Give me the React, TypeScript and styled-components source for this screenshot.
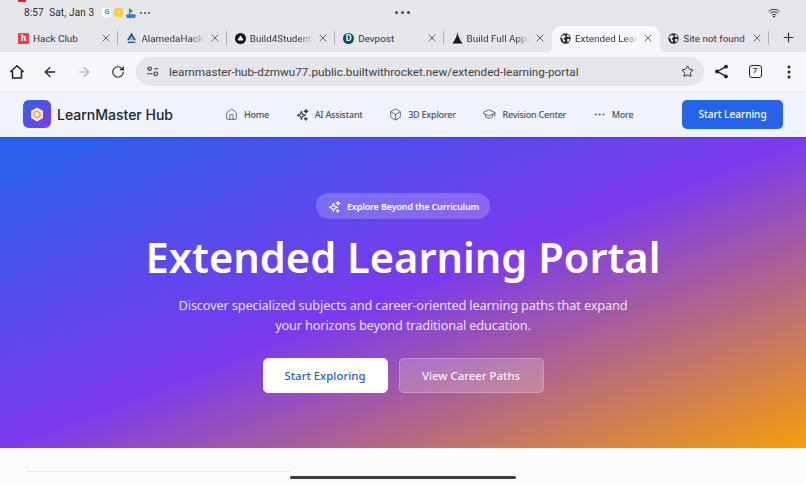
import React from 'react';
import styled, { createGlobalStyle } from 'styled-components';
import { ArrowLeft, ArrowRight, Box, GraduationCap, House, MoreHorizontal, Plus, RotateCw, Star, X } from 'lucide-react';

const GlobalStyle = createGlobalStyle`
  html, body { margin: 0; padding: 0; background: #fafbfc; }
  * { box-sizing: border-box; }
`;

const Page = styled.div`
  position: relative;
  width: 806px;
  height: 484px;
  overflow: hidden;
  display: flex;
  flex-direction: column;
  font-family: 'Noto Sans', sans-serif;
`;

const RecMark = styled.div`
  position: absolute;
  left: 18px;
  top: 0;
  width: 8px;
  height: 2px;
  background: #d8232a;
`;

const StatusBar = styled.div`
  height: 22px;
  flex: none;
  background: #e4e6ea;
  display: grid;
  grid-template-columns: 1fr auto 1fr;
  align-items: center;
  padding: 3px 26px 0 24px;
  font-family: 'Roboto', sans-serif;
  font-size: 10px;
  color: #2b2d30;
`;

const StatusLeft = styled.div`
  display: flex;
  align-items: center;
  gap: 8px;
`;

const StatusTime = styled.span`
  letter-spacing: 0.15px;
  white-space: pre;
`;

const StatusIcons = styled.div`
  display: flex;
  align-items: center;
  gap: 3px;
`;

const Notif = styled.span<{ $bg: string; $color: string }>`
  width: 9px;
  height: 9px;
  border-radius: 2.5px;
  background: ${({ $bg }) => $bg};
  color: ${({ $color }) => $color};
  font-size: 7px;
  font-weight: 700;
  line-height: 9px;
  text-align: center;
`;

const Dots = styled.div<{ $size: number }>`
  display: flex;
  gap: ${({ $size }) => $size}px;
  margin-left: 1px;
  justify-content: center;

  i {
    width: ${({ $size }) => $size}px;
    height: ${({ $size }) => $size}px;
    border-radius: 50%;
    background: #44474c;
  }
`;

const StatusRight = styled.div`
  display: flex;
  justify-content: flex-end;
`;

const TabStrip = styled.div`
  height: 30px;
  flex: none;
  background: #e4e6ea;
  display: flex;
  align-items: stretch;
  padding-left: 10px;
  padding-top: 4px;
  font-family: 'Roboto', sans-serif;
`;

const Tab = styled.div<{ $active?: boolean; $sep?: boolean }>`
  position: relative;
  width: 108.4px;
  display: flex;
  align-items: center;
  gap: 4px;
  padding: 0 6px 2px 8px;
  font-size: 9.9px;
  color: #33363a;
  border-radius: 9px 9px 0 0;
  background: ${({ $active }) => ($active ? '#f5f7fc' : 'transparent')};

  ${({ $sep }) =>
    $sep &&
    `&::after {
      content: '';
      position: absolute;
      right: 0;
      top: 5px;
      height: 14px;
      width: 1px;
      background: #a9b1ba;
    }`}

  ${({ $active }) =>
    $active &&
    `&::before, &::after {
      content: '';
      position: absolute;
      bottom: 0;
      width: 7px;
      height: 7px;
    }
    &::before {
      left: -7px;
      background: radial-gradient(circle at 0 0, transparent 7px, #f5f7fc 7.5px);
    }
    &::after {
      right: -7px;
      background: radial-gradient(circle at 100% 0, transparent 7px, #f5f7fc 7.5px);
    }`}
`;

const TabTitle = styled.span<{ $fade?: boolean }>`
  flex: 1;
  min-width: 0;
  overflow: hidden;
  white-space: nowrap;
  ${({ $fade }) =>
    $fade && 'mask-image: linear-gradient(90deg, #000 78%, transparent 100%);'}
`;

const TabClose = styled(X)`
  flex: none;
  width: 12px;
  height: 12px;
  color: #3c3f44;
`;

const Favicon = styled.span<{ $bg: string; $round?: boolean }>`
  flex: none;
  width: 11px;
  height: 11px;
  display: flex;
  align-items: center;
  justify-content: center;
  background: ${({ $bg }) => $bg};
  border-radius: ${({ $round }) => ($round ? '50%' : '1px')};
  color: #fff;
  font-size: 9px;
  font-weight: 700;
  line-height: 1;
`;

const NewTab = styled(Plus)`
  width: 15px;
  height: 15px;
  margin: 4px 0 0 12px;
  color: #2a2c30;
`;

const Toolbar = styled.div`
  height: 40px;
  flex: none;
  background: #f5f7fc;
  border-bottom: 1px solid #e3e5e9;
  display: flex;
  align-items: center;
  color: #1f2124;
`;

const ToolSlot = styled.span<{ $w?: number; $muted?: boolean }>`
  width: ${({ $w }) => $w ?? 34}px;
  flex: none;
  display: flex;
  justify-content: center;
  align-items: center;
  color: ${({ $muted }) => ($muted ? '#a5a8ad' : '#1f2124')};
`;

const Omnibox = styled.div`
  width: 568px;
  height: 29px;
  flex: none;
  margin-left: 1px;
  background: #e4e6ea;
  border-radius: 15px;
  display: flex;
  align-items: center;
  padding: 0 10px 0 11px;
  font-family: 'Roboto', sans-serif;
  font-size: 11.7px;
  color: #3d4043;
`;

const Url = styled.span`
  flex: 1;
  margin-left: 10px;
  white-space: nowrap;
`;

const TabCount = styled.span`
  width: 13px;
  height: 13px;
  border: 1.5px solid #1f2124;
  border-radius: 3px;
  font-family: 'Roboto', sans-serif;
  font-size: 8px;
  font-weight: 500;
  line-height: 10px;
  text-align: center;
`;

const SiteNav = styled.nav`
  height: 45px;
  flex: none;
  background: #f0f3f9;
  display: flex;
  align-items: center;
  padding: 0 23px 1px 23px;
  box-shadow: 0 1px 1px rgba(30, 40, 80, 0.25);
  position: relative;
`;

const Brand = styled.div`
  display: flex;
  align-items: center;
  gap: 6px;
  width: 202px;
  flex: none;
`;

const LogoTile = styled.div`
  width: 28px;
  height: 28px;
  border-radius: 6px;
  background: linear-gradient(135deg, #2f62e6, #7c3aed);
  display: flex;
  align-items: center;
  justify-content: center;
`;

const BrandName = styled.span`
  font-family: 'Inter', sans-serif;
  font-size: 14px;
  font-weight: 500;
  color: #1e2533;
  white-space: nowrap;
`;

const NavLinks = styled.div`
  display: flex;
  flex: 1;
  align-items: center;
  gap: 26.6px;
`;

const NavLink = styled.a`
  display: flex;
  align-items: center;
  gap: 6px;
  font-size: 9px;
  font-weight: 500;
  letter-spacing: -0.22px;
  color: #465064;
  white-space: nowrap;
`;

const CtaButton = styled.button`
  width: 101px;
  height: 29px;
  border: 0;
  padding: 0;
  border-radius: 5px;
  background: #2563eb;
  color: #fff;
  font-family: 'Noto Sans', sans-serif;
  font-size: 10px;
  font-weight: 500;
`;

const Hero = styled.section`
  height: 311px;
  flex: none;
  background: linear-gradient(to bottom right, #2563eb 0%, #7c3aed 50%, #f59e0b 100%);
  display: flex;
  flex-direction: column;
  align-items: center;
  padding-top: 56px;
  color: #fff;
`;

const Pill = styled.div`
  height: 26px;
  padding: 0 11px 0 12px;
  display: flex;
  align-items: center;
  gap: 6px;
  border-radius: 13px;
  background: rgba(255, 255, 255, 0.2);
  font-size: 9px;
  font-weight: 600;
  letter-spacing: -0.15px;
`;

const HeroTitle = styled.h1`
  margin: 9px 0 0;
  font-size: 41.6px;
  font-weight: 600;
  line-height: 58px;
  white-space: nowrap;
`;

const HeroText = styled.p`
  margin: 9px 0 0;
  width: 460px;
  text-align: center;
  font-size: 12.8px;
  letter-spacing: -0.17px;
  line-height: 20px;
  color: rgba(255, 255, 255, 0.85);
`;

const HeroActions = styled.div`
  display: flex;
  gap: 11px;
  margin-top: 23px;
`;

const HeroButton = styled.button<{ $ghost?: boolean }>`
  height: 35px;
  width: ${({ $ghost }) => ($ghost ? 145 : 125)}px;
  border-radius: 5px;
  padding: 0;
  font-family: 'Noto Sans', sans-serif;
  font-size: 11.4px;
  font-weight: 500;
  border: 1px solid ${({ $ghost }) => ($ghost ? 'rgba(255,255,255,0.2)' : '#fff')};
  background: ${({ $ghost }) => ($ghost ? 'rgba(255,255,255,0.2)' : '#fff')};
  color: ${({ $ghost }) => ($ghost ? 'rgba(255,255,255,0.92)' : '#2a5fc4')};
`;

const Below = styled.section`
  flex: 1;
  background: #fafbfc;
  padding: 23px 0 0 25px;
`;

const FaintRule = styled.div`
  width: 266px;
  height: 1px;
  background: #e9ebef;
`;

const HomeIndicator = styled.div`
  position: absolute;
  left: 290px;
  bottom: 5px;
  width: 226px;
  height: 3px;
  border-radius: 2px;
  background: #3b3d40;
`;

const Sparkle = ({ size, color }: { size: number; color: string }) => (
  <svg width={size} height={size} viewBox="0 0 24 24" fill="none" stroke={color} strokeWidth="1.9" strokeLinejoin="round">
    <path d="M10 6l2 5.5 5.5 2-5.5 2L10 21l-2-5.5-5.5-2 5.5-2z" />
    <path d="M18.5 2.5l1 2.5 2.5 1-2.5 1-1 2.5-1-2.5-2.5-1 2.5-1z" />
    <path d="M18 17.5l.8 1.7 1.7.8-1.7.8-.8 1.7-.8-1.7-1.7-.8 1.7-.8z" />
  </svg>
);

const GlobeFav = () => (
  <svg width="11" height="11" viewBox="0 0 12 12">
    <circle cx="6" cy="6" r="5.6" fill="#2b2d30" />
    <path d="M2 3.2l2.6-.9 1.5 1.2-.6 1.5-1.5.3.3 1.6 1.2 1.2-.7 2-1.4-1.3-.6-2.4L1.2 5zM7.6 1.6l2 1 .9 1.6-1.6.3-1.5-1.2zM8 6.4l2.6.3-.6 2.2-1.6 1.3-.6-2z" fill="#f5f7fc" />
  </svg>
);

const tabs = [
  {
    title: 'Hack Club',
    sep: true,
    icon: <Favicon $bg="#e2434f">h</Favicon>,
  },
  {
    title: 'AlamedaHacks',
    sep: true,
    fade: true,
    icon: (
      <svg width="11" height="12" viewBox="0 0 12 13">
        <path d="M6 .5L11 9H8.6L6 4.6 3.4 9H1z" fill="#1d5c8f" />
        <path d="M6 6l1.6 3H4.4z" fill="#35a4c9" />
        <rect x="2" y="10.5" width="8" height="1.5" fill="#1d5c8f" />
      </svg>
    ),
  },
  {
    title: 'Build4Students',
    sep: true,
    fade: true,
    icon: (
      <svg width="11" height="11" viewBox="0 0 12 12">
        <circle cx="6" cy="6" r="6" fill="#111" />
        <path d="M6 2.6l3 4.6a.6.6 0 0 1-.5.9h-5a.6.6 0 0 1-.5-.9z" fill="#fff" />
      </svg>
    ),
  },
  {
    title: 'Devpost',
    sep: true,
    icon: (
      <Favicon $bg="#0f4a5f" $round>
        D
      </Favicon>
    ),
  },
  {
    title: 'Build Full Apps',
    fade: true,
    icon: (
      <svg width="11" height="12" viewBox="0 0 12 13">
        <path d="M6 0c.5 4 2 8 5.500 12.500H.5C4 8 5.500 4 6 0z" fill="#15171a" />
      </svg>
    ),
  },
  { title: 'Extended Learning', active: true, fade: true, icon: <GlobeFav /> },
  { title: 'Site not found', sep: true, icon: <GlobeFav /> },
];

const navItems = [
  { label: 'Home', icon: <House size={13} strokeWidth={1.5} /> },
  { label: 'AI Assistant', icon: <Sparkle size={13} color="#2d3548" /> },
  { label: '3D Explorer', icon: <Box size={13} strokeWidth={1.5} /> },
  { label: 'Revision Center', icon: <GraduationCap size={14} strokeWidth={1.5} /> },
  { label: 'More', icon: <MoreHorizontal size={13} strokeWidth={1.8} /> },
];

const App = () => {
  return (
    <Page>
      <GlobalStyle />
      <RecMark />
      <StatusBar>
        <StatusLeft>
          <StatusTime>8:57  Sat, Jan 3</StatusTime>
          <StatusIcons>
            <Notif $bg="#fff" $color="#4285f4">G</Notif>
            <Notif $bg="#f6cf45" $color="#fff">▫</Notif>
            <svg width="10" height="10" viewBox="0 0 10 10">
              <path d="M3 0l4 3-4 3z" fill="#2e9e5b" />
              <path d="M0 7c2-1.500 7-1.500 10 0l-1 3H1z" fill="#2f7fd6" />
            </svg>
            <Dots $size={2}>
              <i /><i /><i />
            </Dots>
          </StatusIcons>
        </StatusLeft>
        <Dots $size={3}>
          <i /><i /><i />
        </Dots>
        <StatusRight>
          <svg width="12" height="10" viewBox="0 0 12 10" fill="none" stroke="#3b3d40" strokeWidth="1" strokeLinecap="round">
            <path d="M.8 3.200a7.600 7.600 0 0 1 10.400 0" />
            <path d="M2.500 5a5.200 5.200 0 0 1 7 0" />
            <path d="M4.200 6.800a2.800 2.800 0 0 1 3.600 0" />
            <circle cx="6" cy="8.600" r=".6" fill="#3b3d40" />
          </svg>
        </StatusRight>
      </StatusBar>

      <TabStrip>
        {tabs.map((tab) => (
          <Tab key={tab.title} $active={tab.active} $sep={tab.sep}>
            {tab.icon}
            <TabTitle $fade={tab.fade}>{tab.title}</TabTitle>
            <TabClose strokeWidth={1.6} />
          </Tab>
        ))}
        <NewTab strokeWidth={1.8} />
      </TabStrip>

      <Toolbar>
        <ToolSlot $w={33}>
          <svg width="16" height="16" viewBox="0 0 16 16" fill="none" stroke="#1f2124" strokeWidth="1.500" strokeLinejoin="round">
            <path d="M8 1.800L14.200 7.500H12.500V14H3.500V7.500H1.800z" />
          </svg>
        </ToolSlot>
        <ToolSlot>
          <ArrowLeft size={16} strokeWidth={1.9} />
        </ToolSlot>
        <ToolSlot $muted>
          <ArrowRight size={16} strokeWidth={1.6} />
        </ToolSlot>
        <ToolSlot>
          <RotateCw size={14} strokeWidth={2} />
        </ToolSlot>
        <Omnibox>
          <svg width="12" height="11" viewBox="0 0 13 11" fill="none" stroke="#3d4043" strokeWidth="1.200">
            <path d="M0 2.500h5M0 8h6" />
            <path d="M8 2.500h4" />
            <circle cx="3" cy="2.500" r="1.800" fill="#e4e6ea" />
            <circle cx="9.500" cy="8" r="2" />
          </svg>
          <Url>learnmaster-hub-dzmwu77.public.builtwithrocket.new/extended-learning-portal</Url>
          <Star size={13} strokeWidth={1.7} color="#1f2124" />
        </Omnibox>
        <ToolSlot>
          <svg width="15" height="15" viewBox="0 0 16 16" fill="#1f2124" stroke="#1f2124" strokeWidth="1.500">
            <path d="M12.500 3L3.500 8l9 5" fill="none" />
            <circle cx="12.800" cy="2.800" r="1.300" />
            <circle cx="3.200" cy="8" r="1.300" />
            <circle cx="12.800" cy="13.200" r="1.300" />
          </svg>
        </ToolSlot>
        <ToolSlot>
          <TabCount>7</TabCount>
        </ToolSlot>
        <ToolSlot>
          <svg width="4" height="14" viewBox="0 0 4 14" fill="#1f2124">
            <circle cx="2" cy="2" r="1.500" />
            <circle cx="2" cy="7" r="1.500" />
            <circle cx="2" cy="12" r="1.500" />
          </svg>
        </ToolSlot>
      </Toolbar>

      <SiteNav>
        <Brand>
          <LogoTile>
            <svg width="14" height="15" viewBox="0 0 14 15">
              <path d="M7 .5l6 3.500v7l-6 3.500-6-3.500V4z" fill="#fbeedd" />
              <path d="M7 4l3 1.800v3.400L7 11 4 9.200V5.800z" fill="none" stroke="#e8a33b" strokeWidth="1.400" />
            </svg>
          </LogoTile>
          <BrandName>LearnMaster Hub</BrandName>
        </Brand>
        <NavLinks>
          {navItems.map((item) => (
            <NavLink key={item.label}>
              {item.icon}
              {item.label}
            </NavLink>
          ))}
        </NavLinks>
        <CtaButton>Start Learning</CtaButton>
      </SiteNav>

      <Hero>
        <Pill>
          <Sparkle size={13} color="#fff" />
          Explore Beyond the Curriculum
        </Pill>
        <HeroTitle>Extended Learning Portal</HeroTitle>
        <HeroText>
          Discover specialized subjects and career-oriented learning paths that expand your horizons beyond traditional education.
        </HeroText>
        <HeroActions>
          <HeroButton>Start Exploring</HeroButton>
          <HeroButton $ghost>View Career Paths</HeroButton>
        </HeroActions>
      </Hero>

      <Below>
        <FaintRule />
      </Below>
      <HomeIndicator />
    </Page>
  );
};

export default App;
